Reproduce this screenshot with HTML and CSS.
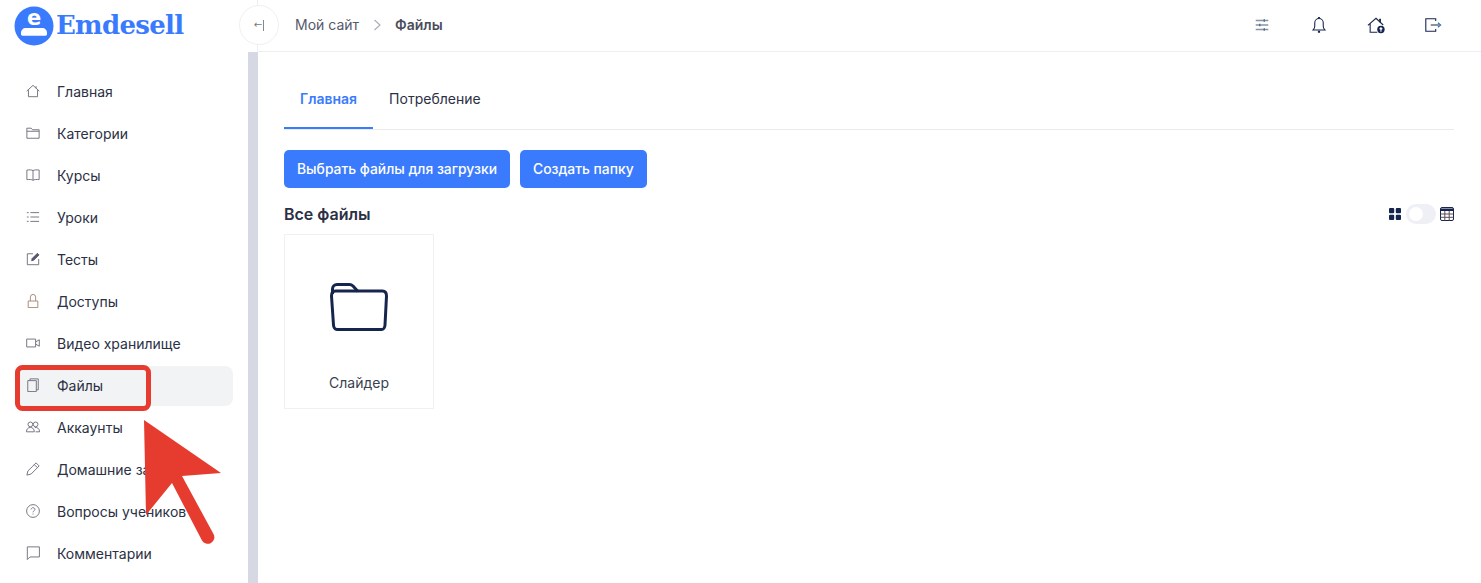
FILE: index.html
```html
<!DOCTYPE html>
<html lang="ru">
<head>
<meta charset="utf-8">
<title>Файлы</title>
<link rel="stylesheet" href="styles.css">
</head>
<body>
<div class="app">
  <aside class="sidebar">
    <div class="logo">
      <svg class="logo-mark" width="40" height="40" viewBox="0 0 40 40">
        <circle cx="20" cy="20" r="19.500" fill="#3a7bfd"/>
        <path d="M7 27c0-3 2-5 5-5h16c3 0 5 2 5 5v1c0 1-.7 1.700-1.500 1.700h-23C7.700 29.700 7 29 7 28z" fill="#fff"/>
        <ellipse cx="20" cy="13" rx="9" ry="9" fill="#3a7bfd"/>
        <text class="logo-e" x="20" y="19" text-anchor="middle">e</text>
      </svg>
      <span class="logo-text">Emdesell</span>
    </div>
    <nav class="nav">
      <a class="nav-item"><svg class="ico" viewBox="0 0 16 16"><path d="M.8 8.200 8 1.500l7.200 6.700M2.800 7v7.500h10.400V7M11.500 2.500v2.500"/></svg><span>Главная</span></a>
      <a class="nav-item"><svg class="ico" viewBox="0 0 16 16"><path d="M1 14V2.500h5l1.500 1.800H15V14zM1 6h14"/></svg><span>Категории</span></a>
      <a class="nav-item"><svg class="ico" viewBox="0 0 16 16"><path d="M8 3C6.500 2 3.500 2 1 2.300v11c2.500-.3 5.500-.3 7 .7 1.500-1 4.500-1 7-.7v-11C12.500 2 9.500 2 8 3zM8 3v11"/></svg><span>Курсы</span></a>
      <a class="nav-item"><svg class="ico" viewBox="0 0 16 16"><path d="M5 3h10M5 8h10M5 13h10M1 3h2M1 8h2M1 13h2"/></svg><span>Уроки</span></a>
      <a class="nav-item"><svg class="ico" viewBox="0 0 16 16"><path d="M14.500 8v6.500H1.500V2H8"/><path class="thick" d="m6.500 10 .5-2.500 6-6 1.800 1.800-6 6z"/></svg><span>Тесты</span></a>
      <a class="nav-item"><svg class="ico ico-warm" viewBox="0 0 16 16"><path d="M2.500 8h11v7.500h-11zM5 8V3.500a3 3 0 0 1 6 0V8"/></svg><span>Доступы</span></a>
      <a class="nav-item"><svg class="ico" viewBox="0 0 16 16"><path d="M.8 3.500h10.200v9H.8zM11 6.800l4.200-2.500v7.400L11 9.200"/></svg><span>Видео хранилище</span></a>
      <a class="nav-item active"><svg class="ico" viewBox="0 0 16 16"><path d="M4.500 3V1h9.500v12.500h-2"/><path d="M2 3h9.800v12.500H2z"/></svg><span>Файлы</span></a>
      <a class="nav-item"><svg class="ico" viewBox="0 0 16 16"><circle cx="5" cy="5" r="2.700"/><circle cx="11" cy="5" r="2.700"/><path d="M.5 13.500c0-3.200 2-5 4.500-5s4.500 1.800 4.500 5zM10 8.600c3-.5 5.500 1.300 5.500 4.900h-4.500"/></svg><span>Аккаунты</span></a>
      <a class="nav-item"><svg class="ico" viewBox="0 0 16 16"><path d="m1 15 1.200-4.800L11.500 1l3.500 3.500-9.200 9.300zM9.500 3l3.500 3.500"/></svg><span>Домашние задания</span></a>
      <a class="nav-item"><svg class="ico" viewBox="0 0 16 16"><circle cx="8" cy="8" r="7.300"/><path d="M5.800 6.200C6 4.800 7 4.200 8 4.200c1.300 0 2.200.8 2.200 2 0 1.600-2.200 1.700-2.200 3.300M8 11v1"/></svg><span>Вопросы учеников</span></a>
      <a class="nav-item"><svg class="ico" viewBox="0 0 16 16"><path d="M1.500 1h13.800v11.500H4.500l-3 3z"/></svg><span>Комментарии</span></a>
    </nav>
  </aside>
  <div class="main">
    <header class="topbar">
      <button class="collapse"><span class="collapse-arrow">←</span><span class="collapse-bar"></span></button>
      <div class="crumbs">
        <span>Мой сайт</span>
        <svg class="crumb-sep" width="9" height="12" viewBox="0 0 9 12"><path d="m1.500 1 5.500 5-5.500 5"/></svg>
        <strong>Файлы</strong>
      </div>
      <div class="top-icons">
        <svg class="top-ico" viewBox="0 0 20 20"><path class="grey" d="M3 5h14M3 10h14M3 15h14" stroke-width="1.500"/><path class="blue" d="M12.500 3.500v3M7.500 8.500v3M12.500 13.500v3" stroke-width="1.500"/></svg>
        <svg class="top-ico" viewBox="0 0 20 20"><path d="M3.500 15.500c1-1 1.800-2 1.800-4.500V7.500a4.700 4.700 0 0 1 9.400 0V11c0 2.500.8 3.500 1.800 4.500z"/><path d="M8.800 17.500h2.400M10 1v1.500" stroke-width="2"/></svg>
        <svg class="top-ico" viewBox="0 0 20 20"><path d="M1 10.500 10 2.500l8 7.500M3.500 8.500V18h8"/><path d="M14.500 3v4" stroke-width="2"/><circle cx="15.500" cy="15" r="3.500" fill="#16254d"/><path class="white" d="M15.500 17.500v-4M14 14.500l1.500-1.500 1.500 1.500"/></svg>
        <svg class="top-ico" viewBox="0 0 20 20"><path d="M13 5.500V3H2v14h11v-2.500"/><path class="grey" d="M7.500 10H17" stroke-width="2.200"/><path class="blue" d="m15.500 7.500 3 2.500-3 2.500"/></svg>
      </div>
    </header>
    <main class="content">
      <div class="tabs">
        <a class="tab tab-active">Главная</a>
        <a class="tab">Потребление</a>
      </div>
      <div class="actions">
        <button class="btn">Выбрать файлы для загрузки</button>
        <button class="btn">Создать папку</button>
      </div>
      <div class="files-head">
        <h2>Все файлы</h2>
        <div class="view-switch">
          <svg width="14" height="14" viewBox="0 0 14 14"><rect x="1" y="1" width="5.200" height="5.200" rx="1" fill="#16254d"/><rect x="7.800" y="1" width="5.200" height="5.200" rx="1" fill="#16254d"/><rect x="1" y="7.800" width="5.200" height="5.200" rx="1" fill="#16254d"/><rect x="7.800" y="7.800" width="5.200" height="5.200" rx="1" fill="#16254d"/></svg>
          <span class="toggle"><span class="knob"></span></span>
          <svg width="14" height="14" viewBox="0 0 14 14"><rect x=".5" y=".5" width="13" height="13" rx="1.500" fill="none" stroke="#16254d"/><path d="M.5 1.500h13v2.500H.5z" fill="#16254d"/><path d="M.5 7h13M.5 10.300h13M4.800 4v9.500M9.200 4v9.500" stroke="#5b4f58" fill="none"/></svg>
        </div>
      </div>
      <div class="file-card">
        <svg class="folder" width="60" height="50" viewBox="0 0 60 50" fill="none" stroke="#16254d" stroke-width="3" stroke-linejoin="round"><path d="M3.500 12V7c0-2.500 2-4.500 4.500-4.500h12.500c1.500 0 2.500.5 3.500 1.500l5 5.500"/><path d="M2.500 14c0-3 1.500-5 4-5h47c2.500 0 4 2 4 5l-1.500 29c-.1 2.500-1.500 4.500-3.500 4.500H8c-2 0-3.400-2-3.500-4.500z"/></svg>
        <span class="file-name">Слайдер</span>
      </div>
    </main>
  </div>
</div>
<svg class="annotation" width="1481" height="583" viewBox="0 0 1481 583">
  <rect x="17.500" y="367.500" width="131" height="41" rx="5" fill="none" stroke="#e63c30" stroke-width="5"/>
  <path d="M144 420 221 473 182 476 213.500 534a6.500 6.500 0 0 1-11.500 6.500L172 483 146 515z" fill="#e63c30"/>
</svg>
</body>
</html>
```
FILE: styles.css
```css
* { box-sizing: border-box; }
html, body { margin: 0; height: 100%; overflow: hidden; background: #fff; }
body { font-family: Inter, "Liberation Sans", sans-serif; color: #2b3044; font-size: 14px; }

.app { display: flex; height: 583px; }

.sidebar { width: 258px; flex: none; display: flex; flex-direction: column; }
.logo { height: 52px; padding: 6px 0 0 14px; display: flex; align-items: flex-start; gap: 2px; flex: none; }
.logo-mark { flex: none; }
.logo-e { font-family: "DejaVu Sans", sans-serif; font-weight: 700; font-size: 21px; fill: #fff; }
.logo-text { font-family: "DejaVu Serif", "Liberation Serif", serif; font-weight: 700; font-size: 26px; line-height: 38px; color: #3a7bfd; letter-spacing: -.7px; }

.nav { flex: 1; border-right: 10px solid #d6d9e3; padding: 20px 15px 0 16px; display: flex; flex-direction: column; gap: 2px; overflow: hidden; }
.nav-item { flex: none; height: 40px; padding: 0 0 2px 10px; display: flex; align-items: center; gap: 17px; border-radius: 8px; color: #2b3044; font-size: 14px; white-space: nowrap; }
.nav-item.active { background: #f2f3f5; }
.ico { width: 14px; height: 14px; flex: none; fill: none; stroke: #75727f; stroke-width: 1.100; }
.ico .thick { fill: #55586a; stroke: #55586a; }
.ico-warm { stroke: #a98a7a; }

.main { flex: 1; min-width: 0; display: flex; flex-direction: column; }
.topbar { position: relative; height: 52px; flex: none; border-bottom: 1px solid #eceef2; display: flex; align-items: center; }
.topbar::before { content: ""; position: absolute; left: -1px; top: 0; bottom: 0; width: 1px; background: #eceef3; }
.collapse { position: absolute; left: -19px; top: 5px; width: 40px; height: 40px; padding: 0; border: 1px solid #eff0f6; border-radius: 50%; background: #fff; display: flex; align-items: center; justify-content: center; gap: 1px; color: #777; }
.collapse-arrow { font-size: 10px; line-height: 1; font-family: "DejaVu Sans", sans-serif; }
.collapse-bar { width: 1px; height: 11px; background: #888; }
.crumbs { margin-left: 37px; padding-bottom: 2px; display: flex; align-items: center; gap: 13px; font-size: 14px; color: #55596a; }
.crumbs strong { font-weight: 600; color: #4a4d5c; font-size: 14px; }
.crumb-sep { margin-left: 1px; fill: none; stroke: #a9abb5; stroke-width: 1.100; }
.top-icons { margin-left: auto; margin-right: 39px; padding-bottom: 2px; display: flex; gap: 39px; }
.top-ico { width: 18px; height: 18px; fill: none; stroke: #16254d; stroke-width: 1.200; }
.top-ico .grey { stroke: #8f929c; }
.top-ico .blue { stroke: #2f6fb5; }
.top-ico .white { stroke: #fff; }

.content { flex: 1; padding: 0 27px 0 26px; }
.tabs { height: 78px; padding-top: 28px; display: flex; border-bottom: 1px solid #e9ebef; }
.tab { height: 49px; padding: 10px 16px 0; font-size: 14px; line-height: 17px; color: #2b3044; }
.tab-active { color: #3a7bfd; font-weight: 600; border-bottom: 2px solid #3a7bfd; }
.actions { margin-top: 20px; display: flex; gap: 10px; }
.btn { height: 38px; padding: 0 13px 1px; border: 0; border-radius: 5px; background: #3a7bfd; color: #fff; font: 500 13.850px Inter, "Liberation Sans", sans-serif; }
.files-head { margin-top: 16px; height: 20px; display: flex; align-items: center; justify-content: space-between; }
.files-head h2 { margin: 0; font-size: 16px; font-weight: 600; color: #2b3044; }
.view-switch { display: flex; align-items: center; gap: 4px; }
.toggle { width: 30px; height: 20px; border-radius: 10px; background: #eef0f6; display: flex; align-items: center; padding-left: 3px; }
.knob { width: 14px; height: 14px; border-radius: 50%; background: #fff; }
.file-card { margin-top: 10px; width: 150px; height: 175px; border: 1px solid #eef0f5; display: flex; flex-direction: column; align-items: center; }
.folder { margin-top: 47px; }
.file-name { margin-top: 42px; font-size: 14px; color: #3a3f52; }

.annotation { position: absolute; left: 0; top: 0; pointer-events: none; }
```
